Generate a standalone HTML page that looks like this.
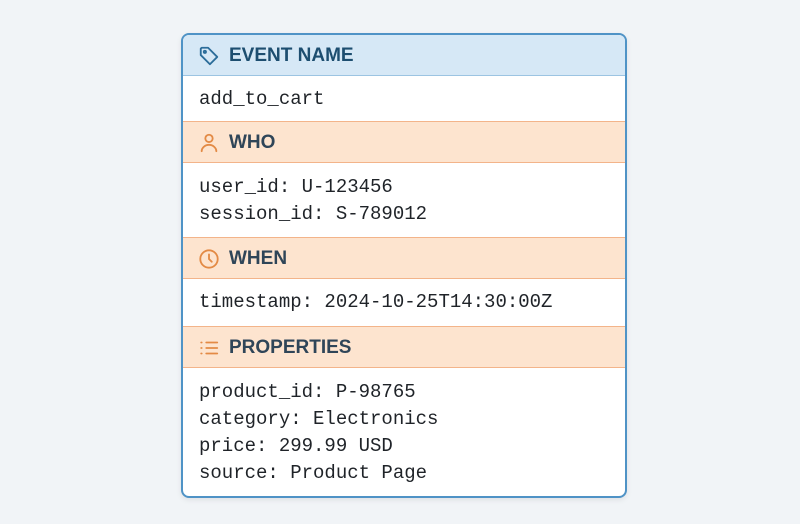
<!DOCTYPE html>
<html><head><style>
body{margin:0;width:800px;height:524px;background:#f1f4f7;font-family:"Liberation Sans",sans-serif;position:relative;overflow:hidden}
.card{position:absolute;left:181px;top:33px;width:442px;height:461px;border:2px solid #4f93c6;border-radius:8px;background:#fff;overflow:hidden;box-shadow:0 2px 6px rgba(0,0,0,.08)}
.h{position:absolute;left:0;right:0;height:40px;font-weight:bold;font-size:19px;color:#2f4558}
.h svg{position:absolute;left:15px;top:10px}
.h span{position:absolute;left:46px;top:10px;line-height:22px}
.o{background:#fde4cf;border-top:1px solid #f3b48a;border-bottom:1px solid #f3b48a}
.b{position:absolute;left:16px;font-family:"Liberation Mono",monospace;font-size:19px;color:#1f2328;line-height:27px}
</style></head><body>
<div class="card">
<div class="h" style="top:0;height:40px;background:#d6e8f6;border-bottom:1px solid #9cc4e2;color:#1d4e70">
<svg width="22" height="22" viewBox="0 0 24 24" fill="none" stroke="#2c6d9a" stroke-width="2" stroke-linejoin="round"><path d="M3 4v7l10 10 8-8L11 3H4z"/><circle cx="7.5" cy="7.5" r="1.2"/></svg><span>EVENT NAME</span></div>
<div class="b" style="top:51px">add_to_cart</div>
<div class="h o" style="top:86px">
<svg width="22" height="22" viewBox="0 0 24 24" fill="none" stroke="#e38a45" stroke-width="2" stroke-linecap="round"><circle cx="12" cy="7" r="4"/><path d="M4 21c0-4 4-7 8-7s8 3 8 7"/></svg><span>WHO</span></div>
<div class="b" style="top:139px">user_id: U-123456<br>session_id: S-789012</div>
<div class="h o" style="top:202px">
<svg width="22" height="22" viewBox="0 0 24 24" fill="none" stroke="#e38a45" stroke-width="2" stroke-linecap="round"><circle cx="12" cy="12" r="9.5"/><path d="M12 7v5l3 3"/></svg><span>WHEN</span></div>
<div class="b" style="top:254px">timestamp: 2024-10-25T14:30:00Z</div>
<div class="h o" style="top:291px">
<svg width="22" height="22" viewBox="0 0 24 24" fill="none" stroke="#e38a45" stroke-width="2" stroke-linecap="round"><path d="M9 6h12M9 12h12M9 18h12M3.5 6h.5M3.5 12h.5M3.5 18h.5"/></svg><span>PROPERTIES</span></div>
<div class="b" style="top:344px">product_id: P-98765<br>category: Electronics<br>price: 299.99 USD<br>source: Product Page</div>
</div>
</body></html>
